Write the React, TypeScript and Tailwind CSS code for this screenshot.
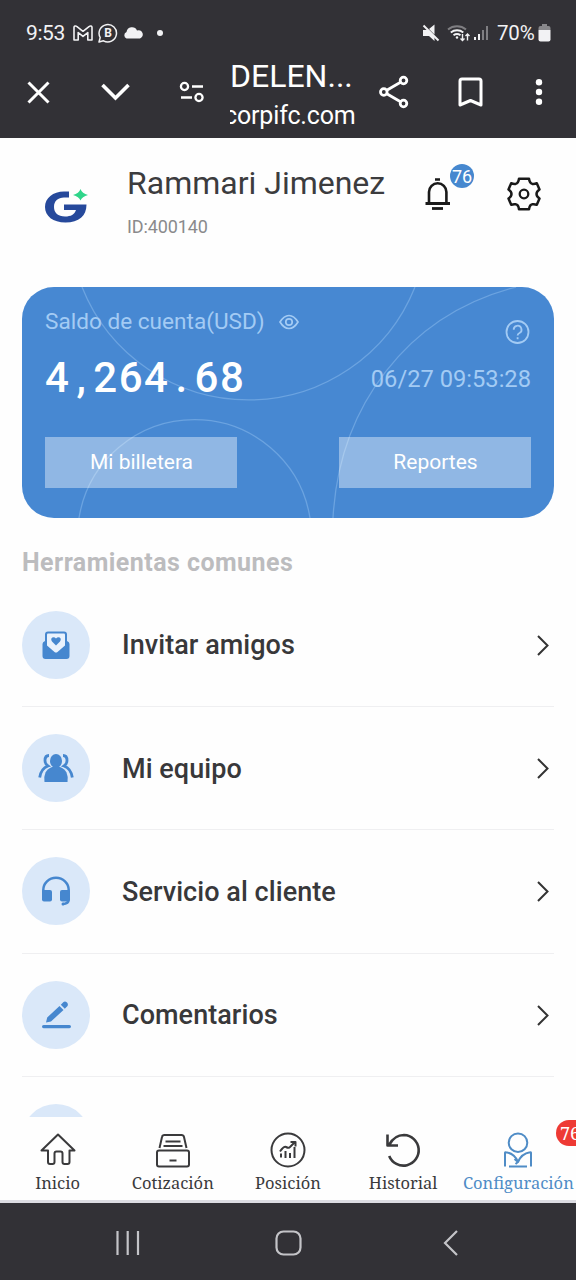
import type { ReactNode } from "react"

function StatusBar() {
    return (
        <div className="flex h-[66px] items-center pl-[26px] pr-[25px] text-[#f2f2f4]">
            <span className="w-[40px] whitespace-nowrap text-[21px] leading-none tracking-[-0.4px]">9:53</span>
            <svg className="ml-[7px]" width="20" height="16" viewBox="0 0 20 16" fill="none" stroke="currentColor" strokeWidth="1.6" strokeLinejoin="round">
                <path d="M1 15V2.5C1 1 2.6.5 3.7 1.4L10 6.3l6.3-4.9C17.4.5 19 1 19 2.5V15h-4.2V7.6L10 11.4 5.2 7.6V15z" />
            </svg>
            <span className="relative ml-[5px] flex h-[20px] w-[20px] items-center justify-center">
                <svg className="absolute inset-0" width="20" height="20" viewBox="0 0 20 20" fill="none" stroke="currentColor" strokeWidth="1.5">
                    <path d="M1 19l1.2-4.5A8.7 8.7 0 1 1 5.5 17.8z" strokeLinejoin="round" />
                </svg>
                <span className="text-[12px] font-bold leading-none">B</span>
            </span>
            <svg className="ml-[5px]" width="20" height="12" viewBox="0 0 20 12" fill="currentColor">
                <path d="M3.5 11.5A3.5 3.5 0 0 1 3.5 5 5.5 5.5 0 0 1 14 3.5 4 4 0 0 1 17 11.5z" />
            </svg>
            <span className="ml-[14px] h-[6px] w-[6px] rounded-full bg-current" />
            <svg className="ml-auto" width="18" height="18" viewBox="0 0 18 18" fill="currentColor">
                <path d="M1 6h5l6.5 7v4L7 12H1zM7 5L12.5.5v10z" />
                <path d="M1.5 1.5l15 15" stroke="currentColor" strokeWidth="1.9" />
            </svg>
            <svg className="ml-[6px]" width="26" height="20" viewBox="0 0 26 20" fill="none" stroke="currentColor" strokeWidth="1.9">
                <path d="M2 6.5a14 14 0 0 1 18 0" opacity=".4" />
                <path d="M4.8 9.5a10 10 0 0 1 12.5 0M7.5 12.3a6 6 0 0 1 7 0" />
                <circle cx="11" cy="14.5" r="1.2" fill="currentColor" stroke="none" />
                <path d="M16.5 11v6.5m-2-2l2 2 2-2M21.5 17.5V11m-2 2l2-2 2 2" strokeWidth="1.4" />
            </svg>
            <svg className="ml-[1px]" width="16" height="16" viewBox="0 0 16 16" fill="currentColor">
                <path d="M1 12h2v3H1zM5 9h2v6H5z" />
                <path d="M9 5h2v10H9zM13 1h2v14h-2z" opacity=".4" />
            </svg>
            <span className="ml-[8px] w-[38px] whitespace-nowrap text-[20.5px] leading-none tracking-[-0.2px]">70%</span>
            <svg className="ml-[3px]" width="13" height="18" viewBox="0 0 13 18" fill="currentColor">
                <path d="M4 0h5v2h1.5Q12.5 2 12.5 4v2H.5V4q0-2 2-2H4z" opacity=".45" />
                <path d="M.5 6h12v9.500q0 2-2 2h-8q-2 0-2-2z" />
            </svg>
        </div>
    )
}

function BrowserBar() {
    return (
        <div className="flex h-[52px] items-center pl-[27px] text-white">
            <svg width="23" height="23" viewBox="0 0 23 23" fill="none" stroke="currentColor" strokeWidth="3">
                <path d="M1.5 1.5l20 20M21.5 1.5l-20 20" />
            </svg>
            <svg className="ml-[51px]" width="29" height="18" viewBox="0 0 29 18" fill="none" stroke="currentColor" strokeWidth="3.6">
                <path d="M1.5 2L14.5 15 27.5 2" />
            </svg>
            <svg className="ml-[49px]" width="26" height="22" viewBox="0 0 26 22" fill="none" stroke="currentColor" strokeWidth="2.3">
                <circle cx="5.5" cy="5.5" r="3.6" />
                <path d="M13 5.5h11M2 16.5h11" />
                <circle cx="20" cy="16.5" r="3.6" />
            </svg>
            <div className="ml-[25px] mt-[8px] w-[126px] overflow-hidden whitespace-nowrap">
                <div className="text-[32px] leading-[39px]">DELEN...</div>
                <div className="-ml-[6px] text-[25px] leading-[39px] tracking-[-0.15px]">corpifc.com</div>
            </div>
            <svg className="ml-[23px]" width="30" height="34" viewBox="0 0 30 34" fill="none" stroke="currentColor" strokeWidth="2.8">
                <circle cx="4.8" cy="17" r="3.3" />
                <circle cx="24.5" cy="5.5" r="3.3" />
                <circle cx="24.5" cy="28.5" r="3.3" />
                <path d="M7.8 15.2L21.5 7.2M7.8 18.8l13.700 8" />
            </svg>
            <svg className="ml-[49px]" width="25" height="31" viewBox="0 0 25 31" fill="none" stroke="currentColor" strokeWidth="3" strokeLinejoin="round">
                <path d="M2 4q0-2 2-2h17q2 0 2 2v24l-10.5-4.5L2 28z" />
            </svg>
            <svg className="ml-[52px]" width="8" height="28" viewBox="0 0 8 28" fill="currentColor">
                <circle cx="4" cy="4.2" r="3.2" />
                <circle cx="4" cy="14" r="3.2" />
                <circle cx="4" cy="23.8" r="3.2" />
            </svg>
        </div>
    )
}

function Profile() {
    return (
        <div className="flex h-[149px] items-start pl-[44px] pr-[35px]">
            <svg className="mt-[51px]" width="45" height="35" viewBox="0 0 45 35">
                <path d="M25 2.5h-5C9 2.5 1 9 1 18s8 15.5 20.5 15.5c13.5 0 21-6.5 21-18H20v5.500h12c-1.5 4.5-5 6.5-11 6.5-7 0-11-3.700-11-9.500 0-6 4-9.500 10-9.500h5z" fill="#26499b" />
                <path d="M36.5 0q1.5 4.5 7.500 6-6 1.500-7.500 5.500-1.500-4-7.500-5.500 6-1.500 7.500-6z" fill="#2fd58a" />
            </svg>
            <div className="ml-[38px] mt-[25px] w-[260px] whitespace-nowrap">
                <div className="text-[32px] leading-[40px] text-[#3c3c3e]">Rammari Jimenez</div>
                <div className="mt-[13px] text-[18px] leading-[22px] tracking-[-0.1px] text-[#8a8a8c]">ID:400140</div>
            </div>
            <div className="relative ml-[38px] mt-[40px]">
                <svg width="26" height="33" viewBox="0 0 26 33" fill="none" stroke="#1a1a1a" strokeWidth="2.6">
                    <path d="M10 1.5h5M4 25V14a8.700 8.700 0 0 1 17.400 0v11" />
                    <path d="M.5 25.500h24.500" strokeWidth="3" />
                    <path d="M7 30.500h11" strokeWidth="2.8" />
                </svg>
                <span className="absolute -top-[14px] left-[25px] flex h-[24px] w-[24px] items-center justify-center rounded-full bg-[#4688cf] text-[18px] text-white">76</span>
            </div>
            <svg className="ml-auto mt-[39px]" width="34" height="34" viewBox="0 0 34 34" fill="none" stroke="#1a1a1a" strokeWidth="2.5" strokeLinejoin="round">
                <path d="M12 1.700h10q.500 4.500 3.300 5.200 2.200.300 4.500-.700l2.700 6.300q-3 2-3 4.500t3 4.500l-2.700 6.300q-2.500-1-4.500-.500-2.700.500-3.300 5H12q-.500-4.500-3.300-5-2-.500-4.500.500L1.500 21.500q3-2 3-4.500t-3-4.500l2.700-6.300q2.300 1 4.500.700Q11.500 6.200 12 1.700z" />
                <circle cx="17" cy="17" r="4.3" strokeWidth="2.3" />
            </svg>
        </div>
    )
}

function BalanceCard() {
    return (
        <div className="relative mx-[22px] h-[231px] overflow-hidden rounded-[32px] bg-[#4788d2] px-[23px] text-[#a3cbf4]">
            <svg className="absolute inset-0" width="532" height="231" viewBox="0 0 532 231" fill="none" stroke="#6ba3e0" strokeWidth="1.3">
                <path d="M60 0a179.200 179.200 0 0 0 333 0" />
                <path d="M57 231a117 117 0 0 1 231 0" />
                <path d="M311 231C317 120 385 28 494 0" />
            </svg>
            <div className="relative flex items-start justify-between">
                <div className="mt-[21px] flex items-center">
                    <span className="whitespace-nowrap text-[22.6px] leading-[28px]">Saldo de cuenta(USD)</span>
                    <svg className="ml-[14px]" width="20" height="16" viewBox="0 0 20 16" fill="none" stroke="currentColor" strokeWidth="1.7">
                        <path d="M1 8q4-6.500 9-6.500T19 8q-4 6.500-9 6.500T1 8z" />
                        <circle cx="10" cy="8" r="3.2" />
                    </svg>
                </div>
                <svg className="mt-[33px]" width="26" height="26" viewBox="0 0 26 26" fill="none" stroke="currentColor" strokeWidth="1.8">
                    <circle cx="12.5" cy="12" r="11" />
                    <path d="M8.7 9.8a3.9 3.9 0 1 1 5.8 3.2q-1.9 1-1.9 2.6" />
                    <path d="M12.6 17.3v2" />
                </svg>
            </div>
            <div className="relative mt-[8px] flex items-center justify-between whitespace-nowrap">
                <span className="pb-[2px] text-[42px] font-medium leading-[48px] tracking-[1.5px] text-white">
                    4<span className="px-[6px]">,</span>264<span className="px-[6px]">.</span>68
                </span>
                <span className="text-[23.7px] leading-[28px]">06/27 09:53:28</span>
            </div>
            <div className="relative mt-[33px] flex justify-between text-[21px] text-white">
                <button className="h-[51px] w-[192px] bg-white/40 pl-px pt-px">Mi billetera</button>
                <button className="h-[51px] w-[192px] bg-white/40 pl-px pt-px">Reportes</button>
            </div>
        </div>
    )
}

const InviteIcon = (
    <svg width="30" height="30" viewBox="0 0 30 30" fill="#4687cf">
        <path d="M4 11V4.5Q4 1.5 7 1.5h16q3 0 3 3V11q2.5 1 2.5 3v12q0 3-3 3h-21q-3 0-3-3V14q0-2 2.5-3z" />
        <path d="M6 4.5q0-1 1-1h16q1 0 1 1v11L16.500 22q-1.500 1-3 0L6 15.500z" fill="#e9f2fd" />
        <path d="M15 15.500l-4-4q-1.700-2.500.300-4 2-1 3.700 1 1.700-2 3.700-1 2 1.500.300 4z" />
    </svg>
)

const TeamIcon = (
    <svg width="36" height="30" viewBox="0 0 36 30" fill="#4687cf">
        <ellipse cx="18" cy="8" rx="6" ry="7" />
        <path d="M6.5 29q-1-5 1-9.500 2-4 6.500-5.500h8q4.500 1.500 6.500 5.500 2 4.500 1 9.500z" />
        <path d="M11 2.500Q7 2.500 7 7.500q0 3.500 3 5.500-7 2.500-8.300 11.500M25 2.500Q29 2.500 29 7.500q0 3.500-3 5.500 7 2.500 8.300 11.500" fill="none" stroke="#4687cf" strokeWidth="2.8" />
    </svg>
)

const SupportIcon = (
    <svg width="30" height="30" viewBox="0 0 30 30" fill="#4687cf">
        <path d="M2.3 17v-3a12.7 12.2 0 0 1 25.4 0v9q0 5-6 5" fill="none" stroke="#4687cf" strokeWidth="2.5" />
        <rect x="1" y="14" width="10" height="11.5" rx="2" />
        <rect x="19" y="14" width="10" height="11.5" rx="2" />
        <circle cx="22" cy="28" r="1.5" />
    </svg>
)

const CommentIcon = (
    <svg width="30" height="30" viewBox="0 0 30 30" fill="#4687cf">
        <path d="M5 22.500l1.200-5L18.500 6l4 4L10 21.500zM19.800 4.800L22.500 2q1.700-1 3.500.500 1.500 1.700.500 3.500L23.800 8.800z" />
        <rect x="1" y="25" width="29" height="3.2" rx="1.6" />
    </svg>
)

const tools: { label: string; icon: ReactNode }[] = [
    { label: "Invitar amigos", icon: InviteIcon },
    { label: "Mi equipo", icon: TeamIcon },
    { label: "Servicio al cliente", icon: SupportIcon },
    { label: "Comentarios", icon: CommentIcon },
    { label: "", icon: null },
]

function ToolRow({ label, icon }: { label: string; icon: ReactNode }) {
    return (
        <div className="flex h-[123.2px] shrink-0 items-center border-b border-[#efeff1]">
            <div className="flex h-[68px] w-[68px] items-center justify-center rounded-full bg-[#dae8f9]">{icon}</div>
            <span className="ml-[32px] pt-px text-[27px] font-medium tracking-[0.05px] text-[#38383a]">{label}</span>
            <svg className="ml-auto mr-[4px]" width="14" height="22" viewBox="0 0 14 22" fill="none" stroke="#333" strokeWidth="2">
                <path d="M2 2L11.5 11.5 2 21" />
            </svg>
        </div>
    )
}

const tabs: { label: string; icon: ReactNode; active?: boolean }[] = [
    {
        label: "Inicio",
        icon: <path d="M18 2.5L34.5 18.5H29.5V30q0 2-2 2H24.5q-2 0-2-2v-8.500q0-2-2-2h-4q-2 0-2 2V30q0 2-2 2H10q-2 0-2-2V18.500H1.500z" />,
    },
    {
        label: "Cotización",
        icon: <path d="M4.5 16L7 5q.4-2 2.5-2h17q2 0 2.5 2l2.5 11M10.5 9.5h15M8.5 14h19M4 18.5h28q2 0 2 2V32.500q0 2-2 2H4q-2 0-2-2V20.500q0-2 2-2zM14.500 28.500h7" />,
    },
    {
        label: "Posición",
        icon: (
            <>
                <circle cx="18" cy="18" r="16.5" />
                <path d="M11 25.5v-4M15.5 26v-7M20 26v-5M24.5 26V15M10 19.5q4-5.500 6-4.500 3 1.500 4 0l5-5M20.500 10h5v4.500" />
            </>
        ),
    },
    {
        label: "Historial",
        icon: <path d="M2.5 2.5V13.5H13M4 13Q9.5 3 19 3a15.3 15.3 0 1 1-14.8 21" strokeWidth="2.6" />,
    },
    {
        label: "Configuración",
        active: true,
        icon: (
            <>
                <circle cx="18" cy="10.7" r="9.3" />
                <path d="M5 34.500V21q0-1 1-.800 8.500 1.300 12 9.800 3.500-8.500 12-9.800 1-.200 1 .800V34.500M9 34.500h18M18 30l-3.500-3M18 30l-2.500 2" />
            </>
        ),
    },
]

function TabBar() {
    return (
        <div className="relative flex h-[86px] overflow-hidden border-b-[3px] border-[#dcdce2] bg-[#fefefe]">
            {tabs.map((tab) => (
                <div key={tab.label} className={`flex w-1/5 flex-col items-center pt-[15px] ${tab.active ? "text-[#4f8cc6]" : "text-[#3a3a3c]"}`}>
                    <svg width="36" height="36" viewBox="0 0 36 36" fill="none" stroke="currentColor" strokeWidth="2" strokeLinejoin="round">
                        {tab.icon}
                    </svg>
                    <span className="mt-[3px] whitespace-nowrap font-['Noto_Serif','Liberation_Serif',serif] text-[16.5px] leading-[24px]">{tab.label}</span>
                </div>
            ))}
            {/* unread count, runs past the right edge of the screen */}
            <span className="absolute left-[556px] top-[3px] flex h-[26px] w-[34px] items-center rounded-full bg-[#ee3a34] pl-[4px] font-['Noto_Serif','Liberation_Serif',serif] text-[18px] text-white">76</span>
        </div>
    )
}

function AndroidNav() {
    return (
        <div className="flex h-[77px] items-center bg-[#323136] pl-[115px] text-[#c4c4c8]">
            <svg className="mt-[3px]" width="26" height="26" viewBox="0 0 26 26" fill="none" stroke="currentColor" strokeWidth="2.2">
                <path d="M2.5 1v24M12.7 1v24M23 1v24" />
            </svg>
            <svg className="ml-[134px] mt-[3px]" width="27" height="26" viewBox="0 0 27 26" fill="none" stroke="currentColor" strokeWidth="2.2">
                <rect x="1.5" y="1.5" width="24" height="23" rx="7" />
            </svg>
            <svg className="ml-[141px] mt-[3px]" width="16" height="26" viewBox="0 0 16 26" fill="none" stroke="currentColor" strokeWidth="2.2">
                <path d="M14 1L2 13l12 12" />
            </svg>
        </div>
    )
}

export default function App() {
    return (
        <div className="flex h-[1280px] w-[576px] flex-col overflow-hidden bg-[#fefefe] font-[Roboto,sans-serif]">
            <div className="h-[138px] shrink-0 bg-[#323136]">
                <StatusBar />
                <BrowserBar />
            </div>
            <div className="h-[979px] shrink-0 overflow-hidden">
                <Profile />
                <BalanceCard />
                <div className="flex h-[66px] items-center px-[22px] pt-[24px] text-[25px] font-bold tracking-[0.45px] text-[#bcbcbe]">Herramientas comunes</div>
                <div className="px-[22px]">
                    {tools.map((tool, i) => (
                        <ToolRow key={i} label={tool.label} icon={tool.icon} />
                    ))}
                </div>
            </div>
            <TabBar />
            <AndroidNav />
        </div>
    )
}
